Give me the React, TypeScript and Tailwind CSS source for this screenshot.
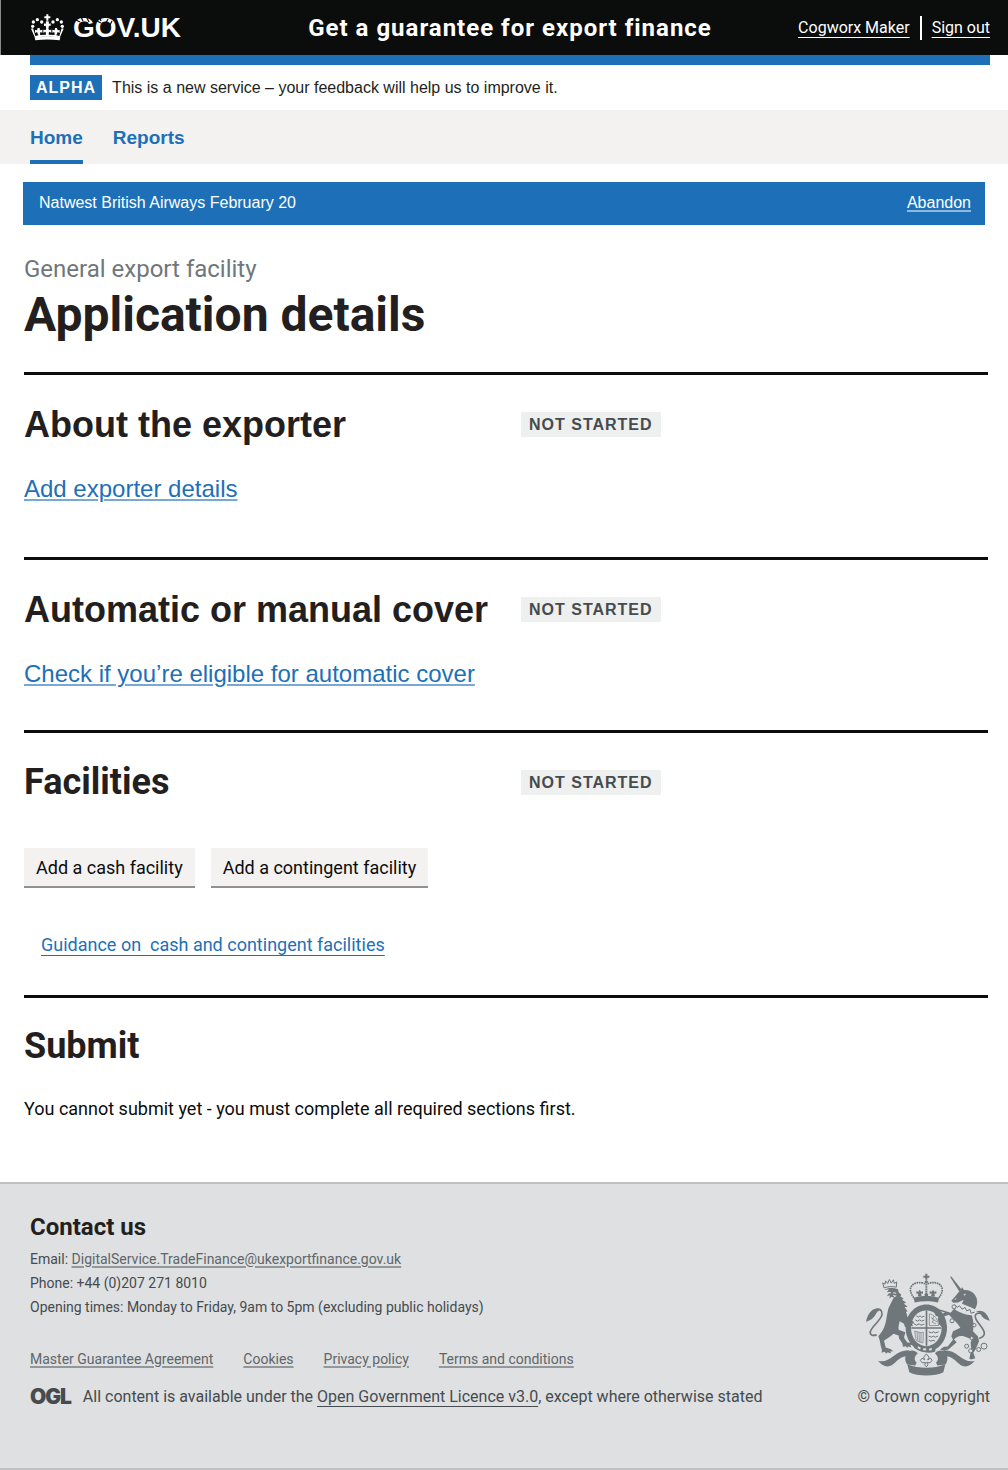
import React from 'react';

const HELVETICA = "font-['Liberation_Sans',Arial,sans-serif]";

interface TaskRowProps {
  title: string;
  status: string;
  titleClass?: string;
}

const footerLinks = ['Master Guarantee Agreement', 'Cookies', 'Privacy policy', 'Terms and conditions'];

const CrownLogo: React.FC = () => (
  <svg width="35" height="27" viewBox="0 0 105 81" fill="#fff" aria-hidden="true">
    <path d="M49 1h6v6h6v6h-6v7h-6v-7h-6V7h6z" />
    <circle cx="8" cy="37" r="5" />
    <circle cx="10" cy="24" r="5" />
    <circle cx="22" cy="17" r="5" />
    <circle cx="35" cy="24" r="5" />
    <path d="M48 22h8l1 8 5-2v8l-5-1-2 9h-6l-2-9-5 1v-8l5 2z" />
    <circle cx="69" cy="24" r="5" />
    <circle cx="82" cy="17" r="5" />
    <circle cx="94" cy="24" r="5" />
    <circle cx="97" cy="37" r="5" />
    <path d="M3 44l6-1 7 23 9-2-4-10-6 3v-9l6 1 2-7h6l1 7 7-2v9l-6-2-1 9 18-1-1-9-7 3v-9l7 1 3-7h4l3 7 7-1v9l-7-3-1 9 18 1-1-9-6 2v-9l7 2 1-7h6l2 7 6-1v9l-6-3-4 10 9 2 7-23 6 1-12 27c-27-5-49-5-74 0z" />
    <path d="M14 70c25-4 53-4 77 0l-2 9c-26-3-48-3-73 0z" />
  </svg>
);

const GovUkLogo: React.FC = () => (
  <a href="#home" className="relative flex w-fit items-center gap-2">
    <CrownLogo />
    <span className={`${HELVETICA} text-[28px] font-bold leading-8`}>GOV.UK</span>
    {/* wear marks across the G and the O */}
    <svg
      className="absolute left-[43px] top-0"
      width="44"
      height="32"
      viewBox="0 0 44 32"
      stroke="#0b0c0c"
      strokeWidth="1.2"
      fill="none"
      aria-hidden="true"
    >
      <path d="M3 8l4 2M8 5l2 4M14 6l2 4M24 9l4 2M27 6l1 3M35 7l-2 4M39 9l-3 6" />
    </svg>
  </a>
);

const RoyalArms: React.FC = () => (
  <svg width="124" height="103" viewBox="12 10 372 308" fill="#6f777b" role="img" aria-label="Royal coat of arms">
    {/* crown */}
    <path d="M190 12h6v6h6v6h-6v6h-6v-6h-6v-6h6z" />
    <circle cx="193" cy="36" r="5" />
    <g fill="none" stroke="#6f777b">
      <path d="M189 42c-12-7-38-5-43 12-3 12 4 22 12 34M197 42c12-7 38-5 43 12 3 12-4 22-12 34" strokeWidth="5" strokeDasharray="5 2" />
      <path d="M193 42v34" strokeWidth="6" strokeDasharray="5 2" />
    </g>
    <path d="M155 84c24-7 52-7 76 0l-3 14c-22-5-48-5-70 0z" />
    <path d="M169 66l4-6 4 6 6-2v8l-6-1 2 9h-12l2-9-6 1v-8zM209 66l4-6 4 6 6-2v8l-6-1 2 9h-12l2-9-6 1v-8zM187 74l6-6 6 6-2 7h-8z" />

    {/* garter and shield */}
    <path fillRule="evenodd" d="M193 104c34 0 62 30 62 70s-28 72-62 72-62-32-62-72 28-70 62-70zm0 18c-26 0-46 22-46 52s20 55 46 55 46-25 46-55-20-52-46-52z" />
    <path d="M191 123h5v105h-5zM148 172h90v5h-90z" />
    <g fill="none" stroke="#6f777b" strokeWidth="3">
      <path d="M163 138l6 4 5-4 5 4 8-3M160 150l7 4 6-4 6 4 8-3M156 162l8 4 7-4 6 4 10-3" />
      <path d="M202 132c14 2 25 14 28 35h-28zM207 143l9 6-6 8 12 5M216 138l-5 10 14 8" strokeWidth="2" />
      <path d="M158 184l4 26c5 5 12 8 21 9l1-32c-8 4-16-2-26-3zM165 186l2 26M171 188l1 28M177 189v28" strokeWidth="2" />
      <path d="M200 186l8 3 6-3 6 3 10-3M200 199l8 3 6-3 6 3 8-3M200 211l7 3 6-3 6 3" />
    </g>
    <path d="M160 221c20 12 43 15 62 10l-3 15c-22 6-43 2-63-12z" />
    <g fill="#dee0e2">
      <path d="M168 229l8 4-1 6-8-4zM184 235l9 1-1 6-9-1zM202 236l8-1-1 6-8 1z" />
    </g>

    {/* lion */}
    <path d="M66 54l-4-15 7 4 2-10 6 8 5-12 6 11 6-10 3 11 7-5-1 16c-13-3-24-2-37 2z" fill="none" stroke="#6f777b" strokeWidth="3" />
    <path d="M67 60c10-6 27-7 41-2l2 9 8 8-3 5 10 6-5 4 13 9-8 2 12 10-9 1 9 13-6 1c4 5 3 9 5 14l10 12 8 2 2 7-6 1 3 8-7-2 1 9-6-5-4 6-3-9-5 3-3-10-13-8c-2 11-5 16-3 26l20 7c-1 7-5 12-3 18l9 13 13 1 4 7-8-1 3 8-9-3-3 4-5-5-8 2-2-11-10-14-1-9-16-5c-9 10-21 14-28 21l5 20 16 5 7 7-9-1 2 7-10-4-4 5-5-6-9 3 1-9c-4-10-5-20-7-29l-4-12 6-7c12-13 17-34 19-51l5-25 15-31-5-4-7 5 2-10-9 3 6-10-7-1 7-9z" />
    <path d="M74 68l11-2 2 4-11 1zM94 67l9 2-1 3-9-2zM86 82h10l-5 7zM92 75l12 3-6 4z" fill="#dee0e2" />
    <path d="M12 156c3-15 8-27 20-36 8-5 17-4 26-1-11 4-14 9-19 18-7 11-15 14-27 19z" />
    <path d="M40 119c14-4 21 3 20 15-2 16-31 36-35 51-2 10 6 14 19 10" fill="none" stroke="#6f777b" strokeWidth="5" />

    {/* unicorn */}
    <path d="M264 21l4-1 31 40-7 5z" />
    <path d="M294 62l7-10 5 9c18-3 36 11 39 29 2 11-1 20-6 28l-11-5-28-11 5-12-17 8-14 1-6-6 12-14z" />
    <path d="M304 73l8-1-4 6zM276 89l8-5-2 5z" fill="#dee0e2" />
    <path d="M278 105l8 7 7-4 7 10 9-5 5 10 10-4 3 11 11-3" fill="none" stroke="#6f777b" strokeWidth="3" />
    <path d="M276 117c16 13 37 18 54 20l5 25-2 22 15 16 3 14-10 24-7 11 6 16-13 4-5-3 6-26-2-20 3-12-22-8c-14-4-23 1-31 8l8 9-25 22-16 3-9-3 12-8 11-1 16-20-5-11 5-15 22-10c-8-14-23-26-34-39l-18 6-6 15 8 9-3 8-11-9-4-17 7-13 15-5-12-5-8 8 2 9-10-3-5-13 9-8 17 4 24 8z" />
    <path d="M371 143c-12-14-23-17-30-9-10 15 27 39 26 57-1 8-6 12-16 15" fill="none" stroke="#6f777b" strokeWidth="5" />
    <path d="M342 125c16-6 33 1 41 28-13-3-22-9-26-18-3-6-7-9-15-10z" />
    <g fill="#dee0e2" stroke="#6f777b" strokeWidth="3">
      <circle cx="276" cy="111" r="6" />
      <circle cx="270" cy="153" r="6" />
      <circle cx="337" cy="166" r="5" />
      <circle cx="329" cy="205" r="5" />
      <circle cx="314" cy="229" r="6" />
      <circle cx="326" cy="243" r="6" />
      <circle cx="350" cy="239" r="6" />
      <circle cx="366" cy="229" r="9" />
    </g>

    {/* motto ribbon, the right half mirrors the left */}
    <g>
      <path d="M48 273c16 5 32-2 48-15 13-11 28-18 46-17l-9 18c-16 1-25 11-38 23-15 13-32 10-47-9z" />
      <path d="M134 248c10-9 25-8 33 2-9 9-13 19-3 28l-4 9-24-3c-8-9-8-24-2-36z" />
    </g>
    <g transform="translate(386 0) scale(-1 1)">
      <path d="M48 273c16 5 32-2 48-15 13-11 28-18 46-17l-9 18c-16 1-25 11-38 23-15 13-32 10-47-9z" />
      <path d="M134 248c10-9 25-8 33 2-9 9-13 19-3 28l-4 9-24-3c-8-9-8-24-2-36z" />
    </g>
    <path d="M136 283c34 14 80 14 114 0l-6 24c-24 13-78 13-102 0z" />
    <path d="M193 252l8 10-4 8 9-5 4 7-6 7-10-1 4 7-5 6-5-6 3-7-10 1-6-7 5-7 8 5-3-8z" fill="none" stroke="#6f777b" strokeWidth="3" />
  </svg>
);

const StatusTag: React.FC<{ children: React.ReactNode }> = ({ children }) => (
  <strong className={`${HELVETICA} bg-[#eeefef] px-2 text-[16px] font-bold leading-[25px] tracking-[1px] text-[#454b4e]`}>
    {children}
  </strong>
);

const TaskRow: React.FC<TaskRowProps> = ({ title, status, titleClass = '' }) => (
  <div className="grid grid-cols-[minmax(0,497px)_1fr] items-center">
    <h2 className={`text-[36px] font-bold leading-[45px] text-[#231f20] ${titleClass}`}>{title}</h2>
    <div className="flex">
      <StatusTag>{status}</StatusTag>
    </div>
  </div>
);

const SecondaryButton: React.FC<{ children: React.ReactNode }> = ({ children }) => (
  <button
    type="button"
    className="h-10 border-b-2 border-[#929191] bg-[#f3f2f1] px-3 text-[18px] leading-[25px] text-[#0b0c0c]"
  >
    {children}
  </button>
);

export default function App() {
  return (
    <div className="bg-white font-['Roboto',sans-serif] text-[#0b0c0c]">
      <header className="bg-[#0b0c0c] text-white">
        <div className="grid h-[55px] grid-cols-[1fr_auto_1fr] items-center border-l border-[#8a8c8c] pl-[29px] pr-[18px]">
          <GovUkLogo />
          <p className="text-[24px] font-bold leading-[30px] tracking-[1px]">Get a guarantee for export finance</p>
          <div className="flex items-center justify-end gap-[10px] text-[16px] leading-6">
            <a href="#account" className="underline underline-offset-4">Cogworx Maker</a>
            <span className="h-6 w-[2px] bg-white" />
            <a href="#sign-out" className="underline underline-offset-4">Sign out</a>
          </div>
        </div>
      </header>

      <div className={`${HELVETICA} pl-[30px] pr-[18px]`}>
        <div className="h-[10px] bg-[#1d70b8]" />
        <div className="flex items-center gap-[10px] py-[10px] text-[16px] leading-[25px]">
          <strong className="bg-[#1d70b8] px-[6px] tracking-[1px] text-white">ALPHA</strong>
          <span className="text-[#231f20]">This is a new service – your feedback will help us to improve it.</span>
        </div>
      </div>

      <nav className="bg-[#f3f2f1] pl-[30px] pr-[18px]">
        <ul className={`${HELVETICA} flex gap-[30px] text-[19px] font-bold leading-[44px] text-[#1d70b8]`}>
          <li className="border-b-4 border-[#1d70b8] pt-[6px]">
            <a href="#home">Home</a>
          </li>
          <li className="border-b-4 border-transparent pt-[6px]">
            <a href="#reports">Reports</a>
          </li>
        </ul>
      </nav>

      <div className="px-[23px] pt-[18px]">
        <div className={`${HELVETICA} flex justify-between bg-[#1d70b8] pb-[2px] pl-4 pr-[14px] text-[16px] leading-[41px] text-white`}>
          <span>Natwest British Airways February 20</span>
          <a href="#abandon" className="underline decoration-white/50 decoration-2 underline-offset-2">Abandon</a>
        </div>
      </div>

      <main className="pl-6 pr-5">
        <div className="border-b-[3px] border-[#0b0c0c] pb-7 pt-[29px]">
          <p className="text-[24px] leading-[30px] text-[#6f777b]">General export facility</p>
          <h1 className="mt-[2px] text-[48px] font-bold leading-[58px] text-[#231f20]">Application details</h1>
        </div>

        <section className="border-b-[3px] border-[#0b0c0c] pb-[53px] pt-[27px]">
          <TaskRow title="About the exporter" status="NOT STARTED" titleClass={HELVETICA} />
          <p className={`${HELVETICA} mt-[27px] text-[24px] leading-[30px]`}>
            <a href="#exporter" className="text-[#1d70b8] underline decoration-[#1d70b8]/60 decoration-2 underline-offset-2">
              Add exporter details
            </a>
          </p>
        </section>

        <section className="border-b-[3px] border-[#0b0c0c] pb-[41px] pt-[27px]">
          <TaskRow title="Automatic or manual cover" status="NOT STARTED" titleClass={HELVETICA} />
          <p className={`${HELVETICA} mt-[27px] text-[24px] leading-[30px]`}>
            <a href="#cover" className="text-[#1d70b8] underline decoration-[#1d70b8]/60 decoration-2 underline-offset-2">
              Check if you’re eligible for automatic cover
            </a>
          </p>
        </section>

        <section className="border-b-[3px] border-[#0b0c0c] pb-[38px] pt-[27px]">
          <TaskRow title="Facilities" status="NOT STARTED" />
          <div className="mt-[43px] flex gap-4">
            <SecondaryButton>Add a cash facility</SecondaryButton>
            <SecondaryButton>Add a contingent facility</SecondaryButton>
          </div>
          <p className="mt-11 pl-[17px] text-[18px] leading-[25px]">
            <a href="#guidance" className="whitespace-pre text-[#1d70b8] underline underline-offset-4">
              {'Guidance on  cash and contingent facilities'}
            </a>
          </p>
        </section>

        <section className="pb-[61px] pt-[26px]">
          <h2 className="text-[36px] font-bold leading-[45px] text-[#231f20]">Submit</h2>
          <p className="mt-[27px] text-[18px] leading-[25px]">
            You cannot submit yet - you must complete all required sections first.
          </p>
        </section>
      </main>

      <footer className="flex items-end justify-between border-y-2 border-[#bfc1c3] bg-[#dee0e2] pb-[59px] pl-[30px] pr-[18px] pt-7 text-[#454b4e]">
        <div>
          <h2 className="text-[24px] font-bold leading-[30px] text-[#231f20]">Contact us</h2>
          <div className="mt-[5px] text-[14px] leading-6">
            <p>
              Email:{' '}
              <a href="#email" className="text-[#5f6669] underline decoration-[#5f6669]/60 decoration-2 underline-offset-2">
                DigitalService.TradeFinance@ukexportfinance.gov.uk
              </a>
            </p>
            <p>Phone: +44 (0)207 271 8010</p>
            <p>Opening times: Monday to Friday, 9am to 5pm (excluding public holidays)</p>
          </div>
          <ul className="mt-7 flex gap-[30px] text-[14px] leading-6 text-[#5f6669]">
            {footerLinks.map((label) => (
              <li key={label}>
                <a href="#footer" className="underline decoration-[#5f6669]/60 decoration-2 underline-offset-2">{label}</a>
              </li>
            ))}
          </ul>
          <div className="mt-[14px] flex items-center gap-3 text-[16px] leading-6">
            <span className="font-['Inter',sans-serif] text-[21px] font-black tracking-tighter">OGL</span>
            <p>
              All content is available under the{' '}
              <a href="#licence" className="underline underline-offset-4">Open Government Licence v3.0</a>, except where
              otherwise stated
            </p>
          </div>
        </div>
        <div className="flex flex-col items-end gap-[9px]">
          <RoyalArms />
          <p className="text-[16px] leading-6">© Crown copyright</p>
        </div>
      </footer>
    </div>
  );
}
